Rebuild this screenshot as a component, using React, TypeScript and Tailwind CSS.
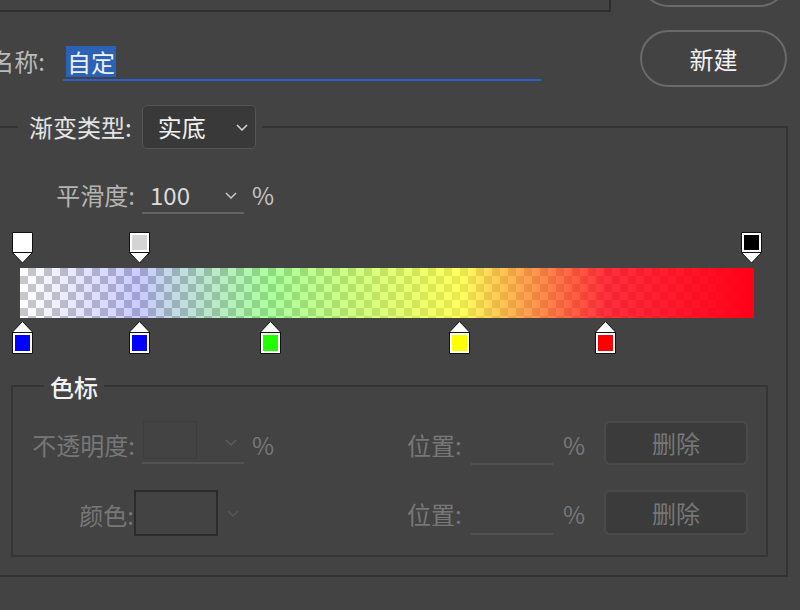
import React from "react";

const FONT = "font-['Noto_Sans_CJK_SC','Noto_Sans',sans-serif]";

type Stop = { p: number; fill: string };

const opacityStops: Stop[] = [
  { p: 0, fill: "#ffffff" },
  { p: 16, fill: "#d4d4d4" },
  { p: 100, fill: "#000000" },
];

const colorStops: Stop[] = [
  { p: 0, fill: "#0000ff" },
  { p: 16, fill: "#0000ff" },
  { p: 34, fill: "#22ff00" },
  { p: 60, fill: "#ffff00" },
  { p: 80, fill: "#ff0000" },
];

// stop centre sits 22.5px at 0% and 751px at 100%
const stopLeft = (p: number) => 12 + p * 7.285;

function Chevron({ className }: { className?: string }) {
  return (
    <svg width="12" height="7" viewBox="0 0 12 7" className={className}>
      <path d="M1 1l5 5 5-5" fill="none" stroke="currentColor" strokeWidth="1.5" />
    </svg>
  );
}

function TopStop({ fill, left }: { fill: string; left: number }) {
  return (
    <svg width="21" height="32" viewBox="0 0 21 32" className="absolute top-0" style={{ left }}>
      <path d="M0.5 0.5H20.5V20.5L10.5 31L0.5 20.5Z" fill="#fff" stroke="#111" />
      <path d="M0.5 20.5H20.5" stroke="#111" />
      <rect x="3" y="3" width="15" height="15" fill={fill} />
    </svg>
  );
}

function BottomStop({ fill, left }: { fill: string; left: number }) {
  return (
    <svg width="21" height="33" viewBox="0 0 21 33" className="absolute top-0" style={{ left }}>
      <path d="M0.5 11L10.5 0.5L20.5 11V32.5H0.5Z" fill="#fff" stroke="#111" />
      <path d="M0.5 11.5H20.5" stroke="#111" />
      <rect x="3" y="14" width="15" height="16" fill={fill} />
    </svg>
  );
}

function PositionField({ height }: { height: string }) {
  return (
    <div className="ml-auto mr-[18px] flex items-start">
      <span className="mt-[2px] w-[56px] leading-[44px] text-[#777]">位置:</span>
      <div className={`ml-[8px] w-[82px] border-b-2 border-[#525252] ${height}`} />
      <span className="ml-[10px] mt-[2px] w-[20px] leading-[44px] text-[#777]">%</span>
      <button className={`ml-[21px] w-[144px] rounded-[6px] border-2 border-[#4a4a4a] bg-[#3b3b3b] leading-none text-[#777] ${height}`}>
        删除
      </button>
    </div>
  );
}

export default function App() {
  return (
    <div className={`h-[610px] w-[800px] overflow-hidden bg-[#434343] text-[24px] ${FONT}`}>
      {/* strip of the panel above */}
      <div className="flex items-start">
        <div className="h-[12px] w-[611px] shrink-0 border-b-2 border-r-2 border-[#2f2f2f]" />
        <div className="-mt-[50px] ml-[29px] h-[57px] w-[148px] shrink-0 rounded-full border-2 border-[#6a6a6a]" />
      </div>

      {/* name */}
      <div className="mt-[18px] flex items-start">
        <div className="mt-[15px] flex w-[45px] shrink-0 justify-end whitespace-nowrap leading-[32px] text-[#bababa]">
          名称:
        </div>
        <div className="ml-[18px] h-[51px] w-[478px] shrink-0 border-b-2 border-[#2d60c6] pt-[14px]">
          <span className="ml-[3px] inline-block h-[31px] bg-[#2c62b5] px-[1px] leading-[31px] text-[#f0f0f0]">自定</span>
        </div>
        <button className="ml-auto mr-[13px] h-[57px] w-[147px] shrink-0 rounded-full border-2 border-[#6a6a6a] leading-none text-[#f2f2f2]">
          新建
        </button>
      </div>

      {/* gradient type group */}
      <div className="-ml-[2px] mt-[39px] w-[790px] border-2 border-[#333333] pb-[18px]">
        <div className="-mt-[23px] ml-[18px] flex h-[44px] w-fit items-center bg-[#434343] pl-[11px] pr-[6px]">
          <span className="leading-[32px] text-[#e4e4e4]">渐变类型:</span>
          <div className="ml-[10px] flex h-[44px] w-[114px] items-center justify-between rounded-[5px] border border-[#555555] bg-[#393939] pl-[15px] pr-[7px]">
            <span className="leading-[32px] text-[#f0f0f0]">实底</span>
            <Chevron className="text-[#d8d8d8]" />
          </div>
        </div>

        <div className="mt-[29px] flex items-start">
          <div className="mt-[1px] flex w-[135px] shrink-0 justify-end whitespace-nowrap leading-[32px] text-[#b4b4b4]">
            平滑度:
          </div>
          <div className="ml-[7px] flex h-[36px] w-[102px] items-center justify-between border-b-2 border-[#636363] pl-[8px] pr-[7px]">
            <span className="leading-[32px] text-[#dcdcdc]">100</span>
            <Chevron className="text-[#c8c8c8]" />
          </div>
          <span className="ml-[8px] mt-[1px] leading-[32px] text-[#c4c4c4]">%</span>
        </div>

        <div className="relative mt-[18px] h-[36px]">
          {opacityStops.map((s) => (
            <TopStop key={s.p} fill={s.fill} left={stopLeft(s.p)} />
          ))}
        </div>

        <div className="ml-[20px] h-[50px] w-[734px] bg-[conic-gradient(#c9c9c9_25%,#ffffff_0_50%,#c9c9c9_0_75%,#ffffff_0)] bg-size-[16px_16px]">
          <div className="h-full w-full bg-[linear-gradient(to_right,rgba(0,0,255,0)_0%,rgba(0,0,255,0.2)_16%,rgba(34,255,0,0.37)_34%,rgba(255,255,0,0.62)_60%,rgba(255,0,16,0.81)_80%,rgba(255,0,24,1)_100%)]" />
        </div>

        <div className="relative mt-[3px] h-[33px]">
          {colorStops.map((s) => (
            <BottomStop key={s.p} fill={s.fill} left={stopLeft(s.p)} />
          ))}
        </div>

        {/* stops group */}
        <div className="ml-[11px] mt-[31px] w-[757px] border-2 border-[#353535] pb-[20px]">
          <div className="-mt-[15px] ml-[31px] w-fit bg-[#434343] px-[6px] font-medium leading-[30px] text-[#f2f2f2]">色标</div>

          <div className="mt-[19px] flex h-[44px] items-start">
            <div className="mt-[2px] flex w-[122px] shrink-0 justify-end whitespace-nowrap leading-[44px] text-[#777]">
              不透明度:
            </div>
            <div className="ml-[7px] flex h-[43px] w-[102px] shrink-0 items-start justify-between border-b-2 border-[#525252]">
              <div className="ml-[1px] h-[38px] w-[54px] border border-[#3d3d3d]" />
              <Chevron className="mr-[7px] mt-[18px] text-[#5c5c5c]" />
            </div>
            <span className="ml-[8px] mt-[2px] leading-[44px] text-[#777]">%</span>
            <PositionField height="h-[44px]" />
          </div>

          <div className="mt-[25px] flex h-[45px] items-start">
            <div className="mt-[3px] flex w-[121px] shrink-0 justify-end whitespace-nowrap leading-[44px] text-[#777]">
              颜色:
            </div>
            <div className="h-[46px] w-[84px] shrink-0 border-2 border-[#2b2b2b]" />
            <Chevron className="ml-[9px] mt-[20px] text-[#555555]" />
            <PositionField height="h-[45px]" />
          </div>
        </div>
      </div>
    </div>
  );
}
